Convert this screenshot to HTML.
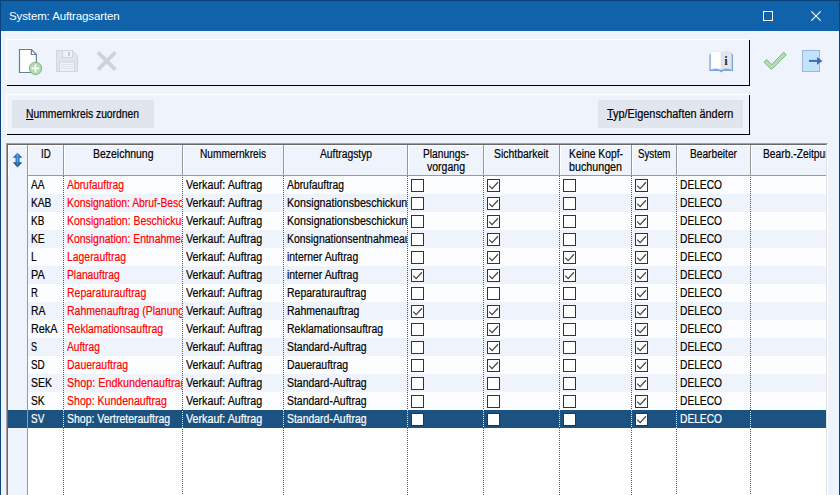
<!DOCTYPE html>
<html lang="de"><head><meta charset="utf-8"><title>System: Auftragsarten</title>
<style>
html,body{margin:0;padding:0}
body{width:840px;height:495px;overflow:hidden;background:#eff3fb;font-family:'Liberation Sans',sans-serif;font-size:12.5px;color:#000}
#win{position:absolute;left:0;top:0;width:840px;height:495px;overflow:hidden;background:#eff3fb}
#win:before{content:"";position:absolute;left:0;top:0;width:1px;height:495px;background:#0a4380;z-index:5}
#win:after{content:"";position:absolute;left:839px;top:0;width:1px;height:495px;background:#0a4380;z-index:5}
#title{position:absolute;left:0;top:0;width:840px;height:31px;background:#1062aa;border-top:1px solid #0a4078;box-sizing:border-box}
.ttext{position:absolute;left:9px;top:8px;font-size:11.5px;line-height:14px;color:#fff;white-space:pre;letter-spacing:-0.12px}
.tb-max{position:absolute;left:763px;top:10px}
.tb-close{position:absolute;left:811px;top:10px}
.panel{position:absolute;box-sizing:border-box;border-top:1px solid #fff;border-left:1px solid #fff;border-right:1px solid #000;border-bottom:1px solid #000}
#p1{left:6px;top:39px;width:744px;height:47px}
#p2{left:6px;top:94px;width:744px;height:41px}
.ln{position:absolute}.ln.w{background:#fff}.ln.k{background:#000}
.btn{position:absolute;top:100px;height:28px;background:#e1e5ee}
#b1{left:12px;width:142px}
#b2{left:598px;width:145px}
.t{display:inline-block;transform-origin:0 0;white-space:pre;-webkit-text-stroke:0.2px}
.btxt{position:absolute;top:100px;line-height:28px;height:28px}
.btxt u{text-decoration:underline}
.ico{position:absolute}
/* grid */
#gridframe{position:absolute;left:6px;top:143px;width:822px;height:360px;box-sizing:border-box;border-left:1px solid #a0a0a0;border-top:1px solid #a0a0a0;border-right:1px solid #fff;z-index:3;pointer-events:none}
#gridframe:after{content:"";position:absolute;left:0;top:0;right:0;bottom:0;border-left:1px solid #696969;border-top:1px solid #696969;border-right:1px solid #e3e3e3}
#grid{position:absolute;left:0;top:0;width:826px;height:495px;overflow:hidden}
#gbg{position:absolute;left:8px;top:145px;width:818px;height:350px;background:#fff}
#ghead{position:absolute;left:8px;top:145px;width:818px;height:30px;background:#eff3fb;box-sizing:border-box;border-top:1px solid #fff;border-left:1px solid #fff}
#rowhdr{position:absolute;left:8px;top:175px;width:19px;height:321px;background:#eff3fb}
#hline{position:absolute;left:27px;top:175px;width:799px;height:1px;background:#9a9a9a}
.row{position:absolute;left:28px;width:798px;height:18px}
.row.wh{background:#fcfdfe}
.row.alt{background:#eff3fb}
.row.sel{background:#1c5282;left:8px;width:818px}
.hdiv{position:absolute;top:145px;width:1px;height:30px;background:#999;box-shadow:1px 0 0 #fff}
.vsolid{position:absolute;top:175px;width:1px;height:320px;background:#9a9a9a}
.vdot{position:absolute;top:176px;width:1px;height:320px;background:repeating-linear-gradient(to bottom,#555 0,#555 1px,transparent 1px,transparent 2px)}
.vdot.seld{top:410px;height:18px;background:repeating-linear-gradient(to bottom,#e8eef5 0,#e8eef5 1px,transparent 1px,transparent 2px)}
#sorticon{position:absolute;left:12px;top:152px}
.hl{position:absolute;height:15px;line-height:15px;white-space:pre}
.c{position:absolute;height:18px;line-height:18px;white-space:pre;overflow:hidden}
.c.red{color:#ff0000}
.c.s{color:#fff}
.cb{position:absolute;width:13px;height:13px;box-sizing:border-box;border:1px solid #333;background:#fff}
.cb svg{position:absolute;left:0;top:0}

</style></head><body>
<div id="win">
<div id="title"><span class="ttext">System: Auftragsarten</span>
<svg class="tb-max" width="10" height="10" viewBox="0 0 10 10"><rect x="0.5" y="0.5" width="9" height="9" fill="none" stroke="#fff" stroke-width="1"/></svg>
<svg class="tb-close" width="10" height="10" viewBox="0 0 10 10"><path d="M0.3 0.3 L9.7 9.7 M9.7 0.3 L0.3 9.7" stroke="#fff" stroke-width="1.1" fill="none"/></svg>
</div>
<div class="ln w" style="left:6px;top:39px;width:744px;height:1px"></div><div class="ln w" style="left:6px;top:39px;width:1px;height:46px"></div><div class="ln k" style="left:749px;top:40px;width:1px;height:46px"></div><div class="ln k" style="left:7px;top:85px;width:743px;height:1px"></div>
<!-- toolbar icons -->
<svg class="ico" style="left:18px;top:48px" width="26" height="30" viewBox="0 0 26 30">
  <path d="M1.5 1.5 H13.4 L18.4 6.5 V24.5 H1.5 Z" fill="#fff" stroke="#6b7f95" stroke-width="1.2"/>
  <path d="M13.4 1.5 V6.5 H18.4" fill="none" stroke="#6b7f95" stroke-width="1.2"/>
  <circle cx="17.5" cy="20.4" r="6.2" fill="#b4dcb4" stroke="#79b885" stroke-width="1"/>
  <path d="M17.5 16.6 V24.2 M13.7 20.4 H21.3" stroke="#fff" stroke-width="1.6" fill="none"/>
</svg>
<svg class="ico" style="left:56px;top:50px" width="22" height="22" viewBox="0 0 22 22">
  <path d="M0.5 0.5 H16.5 L21.5 5.5 V21.5 H0.5 Z" fill="#e1e4ec" stroke="#d2d5dd" stroke-width="1"/>
  <rect x="6.5" y="0.5" width="10" height="7" fill="#eef1f8" stroke="#d2d5dd" stroke-width="1"/>
  <rect x="12" y="2" width="2" height="4" fill="#c9ccd3"/>
  <rect x="3.5" y="12" width="15" height="9.5" fill="#eef1f8" stroke="#d2d5dd" stroke-width="1"/>
  <path d="M5 14.5 H17 M5 16.5 H17 M5 18.5 H17" stroke="#dcdfe6" stroke-width="0.8"/>
</svg>
<svg class="ico" style="left:96px;top:50px" width="22" height="22" viewBox="0 0 22 22">
  <path d="M2 2.4 L19.4 19.6 M19.4 2.4 L2 19.6" stroke="#d0d2d6" stroke-width="3.8" fill="none"/>
</svg>
<svg class="ico" style="left:709px;top:50px" width="25" height="24" viewBox="0 0 25 24">
  <path d="M0.4 5 Q0.4 3.4 2 3.4 H22.4 Q24 3.4 24 5 V21 H14.2 L12.2 22.6 L10.2 21 H0.4 Z" fill="#7aa3dc"/>
  <path d="M1.9 2.4 Q7 -0.2 12.2 2.6 V19.7 Q7 17.6 1.9 19.5 Z" fill="#fff" stroke="#dfe4ee" stroke-width="0.5"/>
  <path d="M12.2 2.6 Q17.4 -0.2 22.5 2.4 V19.5 Q17.4 17.6 12.2 19.7 Z" fill="#e2e7ef" stroke="#d5dbe6" stroke-width="0.5"/>
  <text x="15.2" y="14.7" font-family="'Liberation Serif',serif" font-weight="bold" font-size="12.5" fill="#2b2b33">i</text>
</svg>
<svg class="ico" style="left:762px;top:50px" width="26" height="22" viewBox="0 0 26 22">
  <path d="M2 12.2 L4.6 9.4 L9.6 14.6 L21.8 2.2 L24.2 4.8 L9.6 19.6 Z" fill="#b4dcb4" stroke="#7dbb86" stroke-width="1" stroke-linejoin="round"/>
</svg>
<svg class="ico" style="left:802px;top:50px" width="22" height="22" viewBox="0 0 22 22">
  <rect x="0.5" y="0.5" width="17" height="21" fill="#c2e3fb" stroke="#9bb6e0" stroke-width="1"/>
  <path d="M7 10.9 H16" stroke="#3f6db5" stroke-width="2" fill="none"/>
  <path d="M15 7 L20.4 10.9 L15 14.8 Z" fill="#3f6db5"/>
</svg>

<div class="ln w" style="left:6px;top:94px;width:744px;height:1px"></div><div class="ln w" style="left:6px;top:94px;width:1px;height:40px"></div><div class="ln k" style="left:749px;top:95px;width:1px;height:40px"></div><div class="ln k" style="left:7px;top:134px;width:743px;height:1px"></div>
<div class="btn" id="b1"></div><span class="t btxt" style="left:26px;transform:scaleX(0.8257)"><u>N</u>ummernkreis zuordnen</span>
<div class="btn" id="b2"></div><span class="t btxt" style="left:607px;transform:scaleX(0.8702)"><u>T</u>yp/Eigenschaften ändern</span>
<div id="grid">
<div id="gbg"></div><div id="ghead"></div><div id="rowhdr"></div>
<div class="row wh" style="top:176px"></div>
<div class="row alt" style="top:194px"></div>
<div class="row wh" style="top:212px"></div>
<div class="row alt" style="top:230px"></div>
<div class="row wh" style="top:248px"></div>
<div class="row alt" style="top:266px"></div>
<div class="row wh" style="top:284px"></div>
<div class="row alt" style="top:302px"></div>
<div class="row wh" style="top:320px"></div>
<div class="row alt" style="top:338px"></div>
<div class="row wh" style="top:356px"></div>
<div class="row alt" style="top:374px"></div>
<div class="row wh" style="top:392px"></div>
<div class="row sel" style="top:410px"></div>
<div class="hdiv" style="left:27px"></div>
<div class="vsolid" style="left:27px"></div>
<div class="hdiv" style="left:63px"></div>
<div class="vdot" style="left:63px;top:176px"></div>
<div class="vdot seld" style="left:63px;top:410px;height:18px"></div>
<div class="hdiv" style="left:182px"></div>
<div class="vdot" style="left:182px;top:177px"></div>
<div class="vdot seld" style="left:182px;top:411px;height:17px"></div>
<div class="hdiv" style="left:283px"></div>
<div class="vdot" style="left:283px;top:176px"></div>
<div class="vdot seld" style="left:283px;top:410px;height:18px"></div>
<div class="hdiv" style="left:407px"></div>
<div class="vdot" style="left:407px;top:176px"></div>
<div class="vdot seld" style="left:407px;top:410px;height:18px"></div>
<div class="hdiv" style="left:483px"></div>
<div class="vdot" style="left:483px;top:176px"></div>
<div class="vdot seld" style="left:483px;top:410px;height:18px"></div>
<div class="hdiv" style="left:559px"></div>
<div class="vdot" style="left:559px;top:176px"></div>
<div class="vdot seld" style="left:559px;top:410px;height:18px"></div>
<div class="hdiv" style="left:631px"></div>
<div class="vdot" style="left:631px;top:176px"></div>
<div class="vdot seld" style="left:631px;top:410px;height:18px"></div>
<div class="hdiv" style="left:676px"></div>
<div class="vdot" style="left:676px;top:177px"></div>
<div class="vdot seld" style="left:676px;top:411px;height:17px"></div>
<div class="hdiv" style="left:750px"></div>
<div class="vdot" style="left:750px;top:177px"></div>
<div class="vdot seld" style="left:750px;top:411px;height:17px"></div>
<div id="hline"></div>
<svg id="sorticon" width="11" height="16" viewBox="0 0 11 16"><defs><linearGradient id="sg" x1="0" x2="1" y1="0" y2="0"><stop offset="0" stop-color="#1761aa"/><stop offset="0.36" stop-color="#2a78c0"/><stop offset="0.5" stop-color="#5ba3dd"/><stop offset="0.64" stop-color="#2673bb"/><stop offset="1" stop-color="#10559a"/></linearGradient><linearGradient id="sv" x1="0" x2="0" y1="0" y2="1"><stop offset="0" stop-color="#fff" stop-opacity="0.08"/><stop offset="0.55" stop-color="#000" stop-opacity="0"/><stop offset="1" stop-color="#00204a" stop-opacity="0.45"/></linearGradient></defs><path d="M5.5 0.6 L10.2 5.8 L7.5 5.8 L7.5 10.2 L10.2 10.2 L5.5 15.4 L0.8 10.2 L3.5 10.2 L3.5 5.8 L0.8 5.8 Z" fill="url(#sg)"/><path d="M5.5 0.6 L10.2 5.8 L7.5 5.8 L7.5 10.2 L10.2 10.2 L5.5 15.4 L0.8 10.2 L3.5 10.2 L3.5 5.8 L0.8 5.8 Z" fill="url(#sv)"/></svg>
<div class="hl" style="left:40.65px;top:147px"><span class="t" style="transform:scaleX(0.7760);">ID</span></div>
<div class="hl" style="left:92.75px;top:147px"><span class="t" style="transform:scaleX(0.8370);">Bezeichnung</span></div>
<div class="hl" style="left:200.00px;top:147px"><span class="t" style="transform:scaleX(0.8122);">Nummernkreis</span></div>
<div class="hl" style="left:319.50px;top:147px"><span class="t" style="transform:scaleX(0.8223);">Auftragstyp</span></div>
<div class="hl" style="left:422.50px;top:147px"><span class="t" style="transform:scaleX(0.8171);">Planungs-</span></div>
<div class="hl" style="left:426.50px;top:160px"><span class="t" style="transform:scaleX(0.8409);">vorgang</span></div>
<div class="hl" style="left:494.25px;top:147px"><span class="t" style="transform:scaleX(0.8344);">Sichtbarkeit</span></div>
<div class="hl" style="left:568.50px;top:147px"><span class="t" style="transform:scaleX(0.8266);">Keine Kopf-</span></div>
<div class="hl" style="left:569.00px;top:160px"><span class="t" style="transform:scaleX(0.8566);">buchungen</span></div>
<div class="hl" style="left:637.75px;top:147px"><span class="t" style="transform:scaleX(0.7796);">System</span></div>
<div class="hl" style="left:690.00px;top:147px"><span class="t" style="transform:scaleX(0.8147);">Bearbeiter</span></div>
<div class="hl" style="left:763px;width:63px;top:147px;overflow:hidden"><span class="t" style="transform:scaleX(0.8214);">Bearb.-Zeitpunkt</span></div>
<div class="c " style="left:31px;width:32px;top:176px"><span class="t" style="transform:scaleX(0.8090);">AA</span></div>
<div class="c red" style="left:67px;width:115px;top:176px"><span class="t" style="transform:scaleX(0.8285);">Abrufauftrag</span></div>
<div class="c " style="left:186px;width:97px;top:176px"><span class="t" style="transform:scaleX(0.8566);">Verkauf: Auftrag</span></div>
<div class="c " style="left:287px;width:120px;top:176px"><span class="t" style="transform:scaleX(0.8285);">Abrufauftrag</span></div>
<div class="cb" style="left:411px;top:179px"></div>
<div class="cb on" style="left:487px;top:179px"><svg width="11" height="11" viewBox="0 0 11 11"><path d="M1.2 5.6 L4.1 8.6 L10 2.3" fill="none" stroke="#444" stroke-width="1.25"/></svg></div>
<div class="cb" style="left:563px;top:179px"></div>
<div class="cb on" style="left:635px;top:179px"><svg width="11" height="11" viewBox="0 0 11 11"><path d="M1.2 5.6 L4.1 8.6 L10 2.3" fill="none" stroke="#444" stroke-width="1.25"/></svg></div>
<div class="c " style="left:680px;width:70px;top:176px"><span class="t" style="transform:scaleX(0.8170);">DELECO</span></div>
<div class="c " style="left:31px;width:32px;top:194px"><span class="t" style="transform:scaleX(0.8155);">KAB</span></div>
<div class="c red" style="left:67px;width:115px;top:194px"><span class="t" style="transform:scaleX(0.8298);">Konsignation: Abruf-Beschickung</span></div>
<div class="c " style="left:186px;width:97px;top:194px"><span class="t" style="transform:scaleX(0.8566);">Verkauf: Auftrag</span></div>
<div class="c " style="left:287px;width:120px;top:194px"><span class="t" style="transform:scaleX(0.8527);">Konsignationsbeschickung</span></div>
<div class="cb" style="left:411px;top:197px"></div>
<div class="cb on" style="left:487px;top:197px"><svg width="11" height="11" viewBox="0 0 11 11"><path d="M1.2 5.6 L4.1 8.6 L10 2.3" fill="none" stroke="#444" stroke-width="1.25"/></svg></div>
<div class="cb" style="left:563px;top:197px"></div>
<div class="cb on" style="left:635px;top:197px"><svg width="11" height="11" viewBox="0 0 11 11"><path d="M1.2 5.6 L4.1 8.6 L10 2.3" fill="none" stroke="#444" stroke-width="1.25"/></svg></div>
<div class="c " style="left:680px;width:70px;top:194px"><span class="t" style="transform:scaleX(0.8170);">DELECO</span></div>
<div class="c " style="left:31px;width:32px;top:212px"><span class="t" style="transform:scaleX(0.7970);">KB</span></div>
<div class="c red" style="left:67px;width:115px;top:212px"><span class="t" style="transform:scaleX(0.8392);">Konsignation: Beschickung</span></div>
<div class="c " style="left:186px;width:97px;top:212px"><span class="t" style="transform:scaleX(0.8566);">Verkauf: Auftrag</span></div>
<div class="c " style="left:287px;width:120px;top:212px"><span class="t" style="transform:scaleX(0.8527);">Konsignationsbeschickung</span></div>
<div class="cb" style="left:411px;top:215px"></div>
<div class="cb on" style="left:487px;top:215px"><svg width="11" height="11" viewBox="0 0 11 11"><path d="M1.2 5.6 L4.1 8.6 L10 2.3" fill="none" stroke="#444" stroke-width="1.25"/></svg></div>
<div class="cb" style="left:563px;top:215px"></div>
<div class="cb on" style="left:635px;top:215px"><svg width="11" height="11" viewBox="0 0 11 11"><path d="M1.2 5.6 L4.1 8.6 L10 2.3" fill="none" stroke="#444" stroke-width="1.25"/></svg></div>
<div class="c " style="left:680px;width:70px;top:212px"><span class="t" style="transform:scaleX(0.8170);">DELECO</span></div>
<div class="c " style="left:31px;width:32px;top:230px"><span class="t" style="transform:scaleX(0.8210);">KE</span></div>
<div class="c red" style="left:67px;width:115px;top:230px"><span class="t" style="transform:scaleX(0.8354);">Konsignation: Entnahmeauftrag</span></div>
<div class="c " style="left:186px;width:97px;top:230px"><span class="t" style="transform:scaleX(0.8566);">Verkauf: Auftrag</span></div>
<div class="c " style="left:287px;width:120px;top:230px"><span class="t" style="transform:scaleX(0.8350);">Konsignationsentnahmeauftrag</span></div>
<div class="cb" style="left:411px;top:233px"></div>
<div class="cb on" style="left:487px;top:233px"><svg width="11" height="11" viewBox="0 0 11 11"><path d="M1.2 5.6 L4.1 8.6 L10 2.3" fill="none" stroke="#444" stroke-width="1.25"/></svg></div>
<div class="cb" style="left:563px;top:233px"></div>
<div class="cb on" style="left:635px;top:233px"><svg width="11" height="11" viewBox="0 0 11 11"><path d="M1.2 5.6 L4.1 8.6 L10 2.3" fill="none" stroke="#444" stroke-width="1.25"/></svg></div>
<div class="c " style="left:680px;width:70px;top:230px"><span class="t" style="transform:scaleX(0.8170);">DELECO</span></div>
<div class="c " style="left:31px;width:32px;top:248px"><span class="t" style="transform:scaleX(0.8198);">L</span></div>
<div class="c red" style="left:67px;width:115px;top:248px"><span class="t" style="transform:scaleX(0.8323);">Lagerauftrag</span></div>
<div class="c " style="left:186px;width:97px;top:248px"><span class="t" style="transform:scaleX(0.8566);">Verkauf: Auftrag</span></div>
<div class="c " style="left:287px;width:120px;top:248px"><span class="t" style="transform:scaleX(0.8331);">interner Auftrag</span></div>
<div class="cb" style="left:411px;top:251px"></div>
<div class="cb on" style="left:487px;top:251px"><svg width="11" height="11" viewBox="0 0 11 11"><path d="M1.2 5.6 L4.1 8.6 L10 2.3" fill="none" stroke="#444" stroke-width="1.25"/></svg></div>
<div class="cb on" style="left:563px;top:251px"><svg width="11" height="11" viewBox="0 0 11 11"><path d="M1.2 5.6 L4.1 8.6 L10 2.3" fill="none" stroke="#444" stroke-width="1.25"/></svg></div>
<div class="cb on" style="left:635px;top:251px"><svg width="11" height="11" viewBox="0 0 11 11"><path d="M1.2 5.6 L4.1 8.6 L10 2.3" fill="none" stroke="#444" stroke-width="1.25"/></svg></div>
<div class="c " style="left:680px;width:70px;top:248px"><span class="t" style="transform:scaleX(0.8170);">DELECO</span></div>
<div class="c " style="left:31px;width:32px;top:266px"><span class="t" style="transform:scaleX(0.8698);">PA</span></div>
<div class="c red" style="left:67px;width:115px;top:266px"><span class="t" style="transform:scaleX(0.8242);">Planauftrag</span></div>
<div class="c " style="left:186px;width:97px;top:266px"><span class="t" style="transform:scaleX(0.8566);">Verkauf: Auftrag</span></div>
<div class="c " style="left:287px;width:120px;top:266px"><span class="t" style="transform:scaleX(0.8331);">interner Auftrag</span></div>
<div class="cb on" style="left:411px;top:269px"><svg width="11" height="11" viewBox="0 0 11 11"><path d="M1.2 5.6 L4.1 8.6 L10 2.3" fill="none" stroke="#444" stroke-width="1.25"/></svg></div>
<div class="cb on" style="left:487px;top:269px"><svg width="11" height="11" viewBox="0 0 11 11"><path d="M1.2 5.6 L4.1 8.6 L10 2.3" fill="none" stroke="#444" stroke-width="1.25"/></svg></div>
<div class="cb on" style="left:563px;top:269px"><svg width="11" height="11" viewBox="0 0 11 11"><path d="M1.2 5.6 L4.1 8.6 L10 2.3" fill="none" stroke="#444" stroke-width="1.25"/></svg></div>
<div class="cb on" style="left:635px;top:269px"><svg width="11" height="11" viewBox="0 0 11 11"><path d="M1.2 5.6 L4.1 8.6 L10 2.3" fill="none" stroke="#444" stroke-width="1.25"/></svg></div>
<div class="c " style="left:680px;width:70px;top:266px"><span class="t" style="transform:scaleX(0.8170);">DELECO</span></div>
<div class="c " style="left:31px;width:32px;top:284px"><span class="t" style="transform:scaleX(0.7640);">R</span></div>
<div class="c red" style="left:67px;width:115px;top:284px"><span class="t" style="transform:scaleX(0.8390);">Reparaturauftrag</span></div>
<div class="c " style="left:186px;width:97px;top:284px"><span class="t" style="transform:scaleX(0.8566);">Verkauf: Auftrag</span></div>
<div class="c " style="left:287px;width:120px;top:284px"><span class="t" style="transform:scaleX(0.8390);">Reparaturauftrag</span></div>
<div class="cb" style="left:411px;top:287px"></div>
<div class="cb" style="left:487px;top:287px"></div>
<div class="cb" style="left:563px;top:287px"></div>
<div class="cb on" style="left:635px;top:287px"><svg width="11" height="11" viewBox="0 0 11 11"><path d="M1.2 5.6 L4.1 8.6 L10 2.3" fill="none" stroke="#444" stroke-width="1.25"/></svg></div>
<div class="c " style="left:680px;width:70px;top:284px"><span class="t" style="transform:scaleX(0.8170);">DELECO</span></div>
<div class="c " style="left:31px;width:32px;top:302px"><span class="t" style="transform:scaleX(0.8345);">RA</span></div>
<div class="c red" style="left:67px;width:115px;top:302px"><span class="t" style="transform:scaleX(0.8390);">Rahmenauftrag (Planung)</span></div>
<div class="c " style="left:186px;width:97px;top:302px"><span class="t" style="transform:scaleX(0.8566);">Verkauf: Auftrag</span></div>
<div class="c " style="left:287px;width:120px;top:302px"><span class="t" style="transform:scaleX(0.8402);">Rahmenauftrag</span></div>
<div class="cb on" style="left:411px;top:305px"><svg width="11" height="11" viewBox="0 0 11 11"><path d="M1.2 5.6 L4.1 8.6 L10 2.3" fill="none" stroke="#444" stroke-width="1.25"/></svg></div>
<div class="cb on" style="left:487px;top:305px"><svg width="11" height="11" viewBox="0 0 11 11"><path d="M1.2 5.6 L4.1 8.6 L10 2.3" fill="none" stroke="#444" stroke-width="1.25"/></svg></div>
<div class="cb" style="left:563px;top:305px"></div>
<div class="cb on" style="left:635px;top:305px"><svg width="11" height="11" viewBox="0 0 11 11"><path d="M1.2 5.6 L4.1 8.6 L10 2.3" fill="none" stroke="#444" stroke-width="1.25"/></svg></div>
<div class="c " style="left:680px;width:70px;top:302px"><span class="t" style="transform:scaleX(0.8170);">DELECO</span></div>
<div class="c " style="left:31px;width:32px;top:320px"><span class="t" style="transform:scaleX(0.8666);">RekA</span></div>
<div class="c red" style="left:67px;width:115px;top:320px"><span class="t" style="transform:scaleX(0.8382);">Reklamationsauftrag</span></div>
<div class="c " style="left:186px;width:97px;top:320px"><span class="t" style="transform:scaleX(0.8566);">Verkauf: Auftrag</span></div>
<div class="c " style="left:287px;width:120px;top:320px"><span class="t" style="transform:scaleX(0.8382);">Reklamationsauftrag</span></div>
<div class="cb" style="left:411px;top:323px"></div>
<div class="cb on" style="left:487px;top:323px"><svg width="11" height="11" viewBox="0 0 11 11"><path d="M1.2 5.6 L4.1 8.6 L10 2.3" fill="none" stroke="#444" stroke-width="1.25"/></svg></div>
<div class="cb" style="left:563px;top:323px"></div>
<div class="cb on" style="left:635px;top:323px"><svg width="11" height="11" viewBox="0 0 11 11"><path d="M1.2 5.6 L4.1 8.6 L10 2.3" fill="none" stroke="#444" stroke-width="1.25"/></svg></div>
<div class="c " style="left:680px;width:70px;top:320px"><span class="t" style="transform:scaleX(0.8170);">DELECO</span></div>
<div class="c " style="left:31px;width:32px;top:338px"><span class="t" style="transform:scaleX(0.7311);">S</span></div>
<div class="c red" style="left:67px;width:115px;top:338px"><span class="t" style="transform:scaleX(0.8136);">Auftrag</span></div>
<div class="c " style="left:186px;width:97px;top:338px"><span class="t" style="transform:scaleX(0.8566);">Verkauf: Auftrag</span></div>
<div class="c " style="left:287px;width:120px;top:338px"><span class="t" style="transform:scaleX(0.8361);">Standard-Auftrag</span></div>
<div class="cb" style="left:411px;top:341px"></div>
<div class="cb on" style="left:487px;top:341px"><svg width="11" height="11" viewBox="0 0 11 11"><path d="M1.2 5.6 L4.1 8.6 L10 2.3" fill="none" stroke="#444" stroke-width="1.25"/></svg></div>
<div class="cb" style="left:563px;top:341px"></div>
<div class="cb on" style="left:635px;top:341px"><svg width="11" height="11" viewBox="0 0 11 11"><path d="M1.2 5.6 L4.1 8.6 L10 2.3" fill="none" stroke="#444" stroke-width="1.25"/></svg></div>
<div class="c " style="left:680px;width:70px;top:338px"><span class="t" style="transform:scaleX(0.8170);">DELECO</span></div>
<div class="c " style="left:31px;width:32px;top:356px"><span class="t" style="transform:scaleX(0.7942);">SD</span></div>
<div class="c red" style="left:67px;width:115px;top:356px"><span class="t" style="transform:scaleX(0.8373);">Dauerauftrag</span></div>
<div class="c " style="left:186px;width:97px;top:356px"><span class="t" style="transform:scaleX(0.8566);">Verkauf: Auftrag</span></div>
<div class="c " style="left:287px;width:120px;top:356px"><span class="t" style="transform:scaleX(0.8373);">Dauerauftrag</span></div>
<div class="cb" style="left:411px;top:359px"></div>
<div class="cb on" style="left:487px;top:359px"><svg width="11" height="11" viewBox="0 0 11 11"><path d="M1.2 5.6 L4.1 8.6 L10 2.3" fill="none" stroke="#444" stroke-width="1.25"/></svg></div>
<div class="cb" style="left:563px;top:359px"></div>
<div class="cb on" style="left:635px;top:359px"><svg width="11" height="11" viewBox="0 0 11 11"><path d="M1.2 5.6 L4.1 8.6 L10 2.3" fill="none" stroke="#444" stroke-width="1.25"/></svg></div>
<div class="c " style="left:680px;width:70px;top:356px"><span class="t" style="transform:scaleX(0.8170);">DELECO</span></div>
<div class="c " style="left:31px;width:32px;top:374px"><span class="t" style="transform:scaleX(0.8355);">SEK</span></div>
<div class="c red" style="left:67px;width:115px;top:374px"><span class="t" style="transform:scaleX(0.8648);">Shop: Endkundenauftrag</span></div>
<div class="c " style="left:186px;width:97px;top:374px"><span class="t" style="transform:scaleX(0.8566);">Verkauf: Auftrag</span></div>
<div class="c " style="left:287px;width:120px;top:374px"><span class="t" style="transform:scaleX(0.8361);">Standard-Auftrag</span></div>
<div class="cb" style="left:411px;top:377px"></div>
<div class="cb" style="left:487px;top:377px"></div>
<div class="cb" style="left:563px;top:377px"></div>
<div class="cb on" style="left:635px;top:377px"><svg width="11" height="11" viewBox="0 0 11 11"><path d="M1.2 5.6 L4.1 8.6 L10 2.3" fill="none" stroke="#444" stroke-width="1.25"/></svg></div>
<div class="c " style="left:680px;width:70px;top:374px"><span class="t" style="transform:scaleX(0.8170);">DELECO</span></div>
<div class="c " style="left:31px;width:32px;top:392px"><span class="t" style="transform:scaleX(0.8210);">SK</span></div>
<div class="c red" style="left:67px;width:115px;top:392px"><span class="t" style="transform:scaleX(0.8446);">Shop: Kundenauftrag</span></div>
<div class="c " style="left:186px;width:97px;top:392px"><span class="t" style="transform:scaleX(0.8566);">Verkauf: Auftrag</span></div>
<div class="c " style="left:287px;width:120px;top:392px"><span class="t" style="transform:scaleX(0.8361);">Standard-Auftrag</span></div>
<div class="cb" style="left:411px;top:395px"></div>
<div class="cb" style="left:487px;top:395px"></div>
<div class="cb" style="left:563px;top:395px"></div>
<div class="cb on" style="left:635px;top:395px"><svg width="11" height="11" viewBox="0 0 11 11"><path d="M1.2 5.6 L4.1 8.6 L10 2.3" fill="none" stroke="#444" stroke-width="1.25"/></svg></div>
<div class="c " style="left:680px;width:70px;top:392px"><span class="t" style="transform:scaleX(0.8170);">DELECO</span></div>
<div class="c s" style="left:31px;width:32px;top:410px"><span class="t" style="transform:scaleX(0.7970);">SV</span></div>
<div class="c s" style="left:67px;width:115px;top:410px"><span class="t" style="transform:scaleX(0.8382);">Shop: Vertreterauftrag</span></div>
<div class="c s" style="left:186px;width:97px;top:410px"><span class="t" style="transform:scaleX(0.8566);">Verkauf: Auftrag</span></div>
<div class="c s" style="left:287px;width:120px;top:410px"><span class="t" style="transform:scaleX(0.8361);">Standard-Auftrag</span></div>
<div class="cb" style="left:411px;top:413px"></div>
<div class="cb" style="left:487px;top:413px"></div>
<div class="cb" style="left:563px;top:413px"></div>
<div class="cb on" style="left:635px;top:413px"><svg width="11" height="11" viewBox="0 0 11 11"><path d="M1.2 5.6 L4.1 8.6 L10 2.3" fill="none" stroke="#444" stroke-width="1.25"/></svg></div>
<div class="c s" style="left:680px;width:70px;top:410px"><span class="t" style="transform:scaleX(0.8170);">DELECO</span></div>
</div>
<div id="gridframe"></div>
</div>
</body></html>
